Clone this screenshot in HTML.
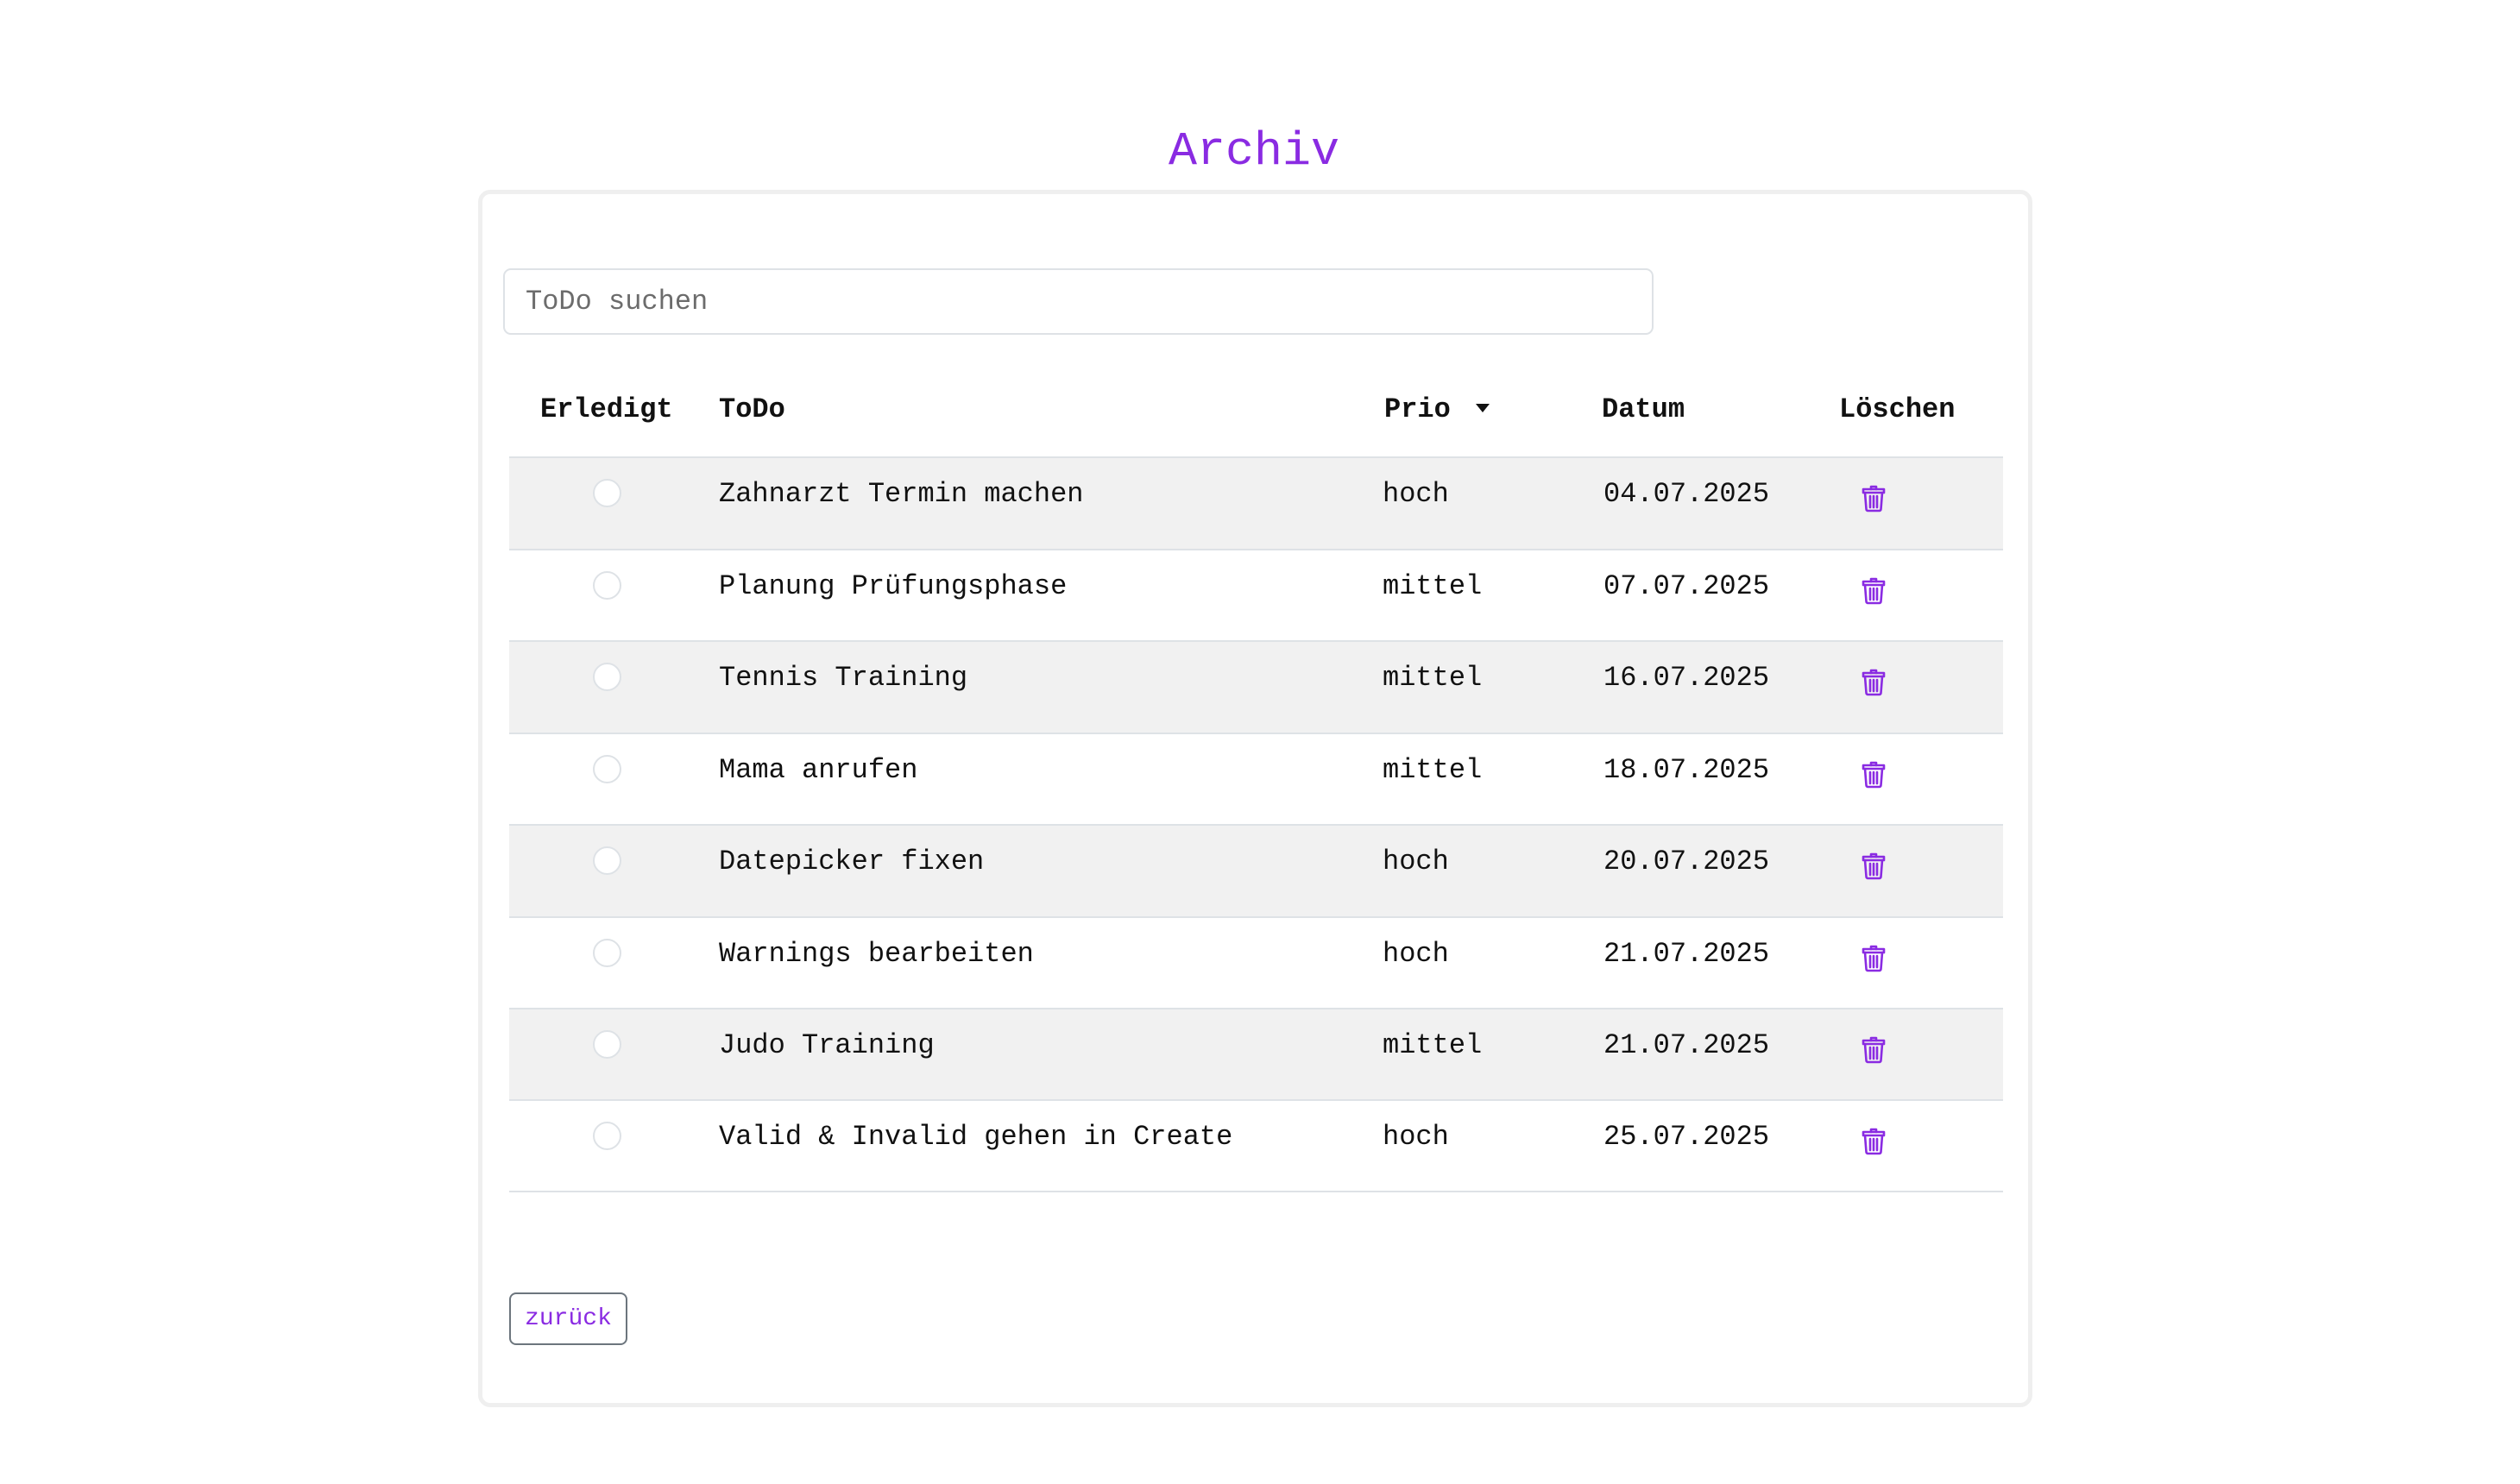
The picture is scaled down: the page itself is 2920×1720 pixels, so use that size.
<!DOCTYPE html>
<html><head><meta charset="utf-8"><style>
html,body{margin:0;padding:0;background:#fff;width:2920px;height:1720px;overflow:hidden;font-family:"Liberation Mono","Courier New",monospace;color:#111;}
.abs{position:absolute;}
.title{position:absolute;left:-7px;width:2920px;top:143px;text-align:center;font-size:55px;color:#8a2be2;line-height:66px;}
.card{position:absolute;left:554px;top:220px;width:1791px;height:1401px;border:5px solid #efefef;border-radius:14px;}
.search{position:absolute;left:583px;top:311px;width:1329px;height:73px;border:2px solid #dee2e6;border-radius:9px;font-size:32px;color:#6c6c6c;line-height:73px;box-sizing:content-box;}
.search span{position:absolute;left:24px;}
.th{position:absolute;top:455px;font-size:32px;font-weight:bold;line-height:40px;}
.row{position:absolute;left:590px;width:1731px;height:105px;border-top:2px solid #dee2e6;}
.row.g{background:#f1f1f1;}
.row .t{position:absolute;top:22px;font-size:32px;line-height:40px;white-space:pre;}
.radio{position:absolute;left:97px;top:24px;width:29px;height:29px;border:2px solid #dee2e6;border-radius:50%;background:#fff;}
.trash{position:absolute;left:1567px;top:30px;}
.last{position:absolute;left:590px;top:1380px;width:1731px;border-top:2px solid #dee2e6;}
.btn{position:absolute;left:590px;top:1498px;width:133px;height:57px;border:2px solid #6c757d;border-radius:8px;color:#8a2be2;font-size:28px;line-height:57px;text-align:center;}
</style></head><body>
<div class="title">Archiv</div>
<div class="card"></div>
<div class="search"><span>ToDo suchen</span></div>
<div class="th" style="left:626px">Erledigt</div>
<div class="th" style="left:833px">ToDo</div>
<div class="th" style="left:1604px">Prio</div>
<svg class="abs" style="left:1709px;top:467px" width="18" height="12" viewBox="0 0 18 12"><path d="M1 1h16L9 11z" fill="#111"/></svg>
<div class="th" style="left:1856px">Datum</div>
<div class="th" style="left:2131px">Löschen</div>

<div class="row g" style="top:529px"><div class="radio"></div><div class="t" style="left:243px">Zahnarzt Termin machen</div><div class="t" style="left:1012px">hoch</div><div class="t" style="left:1268px">04.07.2025</div><svg class="trash" width="28" height="33" viewBox="0 0 28 33"><g fill="none" stroke="#8a2be2" stroke-width="2.6" stroke-linecap="round" stroke-linejoin="round"><path d="M2 6h24v4H2z"/><path d="M11 6V3h6v3"/><path d="M4 10l1.5 19a2 2 0 0 0 2 2h13a2 2 0 0 0 2-2L24 10"/><path d="M10 14v13M14 14v13M18 14v13"/></g></svg></div>
<div class="row" style="top:636px"><div class="radio"></div><div class="t" style="left:243px">Planung Prüfungsphase</div><div class="t" style="left:1012px">mittel</div><div class="t" style="left:1268px">07.07.2025</div><svg class="trash" width="28" height="33" viewBox="0 0 28 33"><g fill="none" stroke="#8a2be2" stroke-width="2.6" stroke-linecap="round" stroke-linejoin="round"><path d="M2 6h24v4H2z"/><path d="M11 6V3h6v3"/><path d="M4 10l1.5 19a2 2 0 0 0 2 2h13a2 2 0 0 0 2-2L24 10"/><path d="M10 14v13M14 14v13M18 14v13"/></g></svg></div>
<div class="row g" style="top:742px"><div class="radio"></div><div class="t" style="left:243px">Tennis Training</div><div class="t" style="left:1012px">mittel</div><div class="t" style="left:1268px">16.07.2025</div><svg class="trash" width="28" height="33" viewBox="0 0 28 33"><g fill="none" stroke="#8a2be2" stroke-width="2.6" stroke-linecap="round" stroke-linejoin="round"><path d="M2 6h24v4H2z"/><path d="M11 6V3h6v3"/><path d="M4 10l1.5 19a2 2 0 0 0 2 2h13a2 2 0 0 0 2-2L24 10"/><path d="M10 14v13M14 14v13M18 14v13"/></g></svg></div>
<div class="row" style="top:849px"><div class="radio"></div><div class="t" style="left:243px">Mama anrufen</div><div class="t" style="left:1012px">mittel</div><div class="t" style="left:1268px">18.07.2025</div><svg class="trash" width="28" height="33" viewBox="0 0 28 33"><g fill="none" stroke="#8a2be2" stroke-width="2.6" stroke-linecap="round" stroke-linejoin="round"><path d="M2 6h24v4H2z"/><path d="M11 6V3h6v3"/><path d="M4 10l1.5 19a2 2 0 0 0 2 2h13a2 2 0 0 0 2-2L24 10"/><path d="M10 14v13M14 14v13M18 14v13"/></g></svg></div>
<div class="row g" style="top:955px"><div class="radio"></div><div class="t" style="left:243px">Datepicker fixen</div><div class="t" style="left:1012px">hoch</div><div class="t" style="left:1268px">20.07.2025</div><svg class="trash" width="28" height="33" viewBox="0 0 28 33"><g fill="none" stroke="#8a2be2" stroke-width="2.6" stroke-linecap="round" stroke-linejoin="round"><path d="M2 6h24v4H2z"/><path d="M11 6V3h6v3"/><path d="M4 10l1.5 19a2 2 0 0 0 2 2h13a2 2 0 0 0 2-2L24 10"/><path d="M10 14v13M14 14v13M18 14v13"/></g></svg></div>
<div class="row" style="top:1062px"><div class="radio"></div><div class="t" style="left:243px">Warnings bearbeiten</div><div class="t" style="left:1012px">hoch</div><div class="t" style="left:1268px">21.07.2025</div><svg class="trash" width="28" height="33" viewBox="0 0 28 33"><g fill="none" stroke="#8a2be2" stroke-width="2.6" stroke-linecap="round" stroke-linejoin="round"><path d="M2 6h24v4H2z"/><path d="M11 6V3h6v3"/><path d="M4 10l1.5 19a2 2 0 0 0 2 2h13a2 2 0 0 0 2-2L24 10"/><path d="M10 14v13M14 14v13M18 14v13"/></g></svg></div>
<div class="row g" style="top:1168px"><div class="radio"></div><div class="t" style="left:243px">Judo Training</div><div class="t" style="left:1012px">mittel</div><div class="t" style="left:1268px">21.07.2025</div><svg class="trash" width="28" height="33" viewBox="0 0 28 33"><g fill="none" stroke="#8a2be2" stroke-width="2.6" stroke-linecap="round" stroke-linejoin="round"><path d="M2 6h24v4H2z"/><path d="M11 6V3h6v3"/><path d="M4 10l1.5 19a2 2 0 0 0 2 2h13a2 2 0 0 0 2-2L24 10"/><path d="M10 14v13M14 14v13M18 14v13"/></g></svg></div>
<div class="row" style="top:1274px"><div class="radio"></div><div class="t" style="left:243px">Valid &amp; Invalid gehen in Create</div><div class="t" style="left:1012px">hoch</div><div class="t" style="left:1268px">25.07.2025</div><svg class="trash" width="28" height="33" viewBox="0 0 28 33"><g fill="none" stroke="#8a2be2" stroke-width="2.6" stroke-linecap="round" stroke-linejoin="round"><path d="M2 6h24v4H2z"/><path d="M11 6V3h6v3"/><path d="M4 10l1.5 19a2 2 0 0 0 2 2h13a2 2 0 0 0 2-2L24 10"/><path d="M10 14v13M14 14v13M18 14v13"/></g></svg></div>
<div class="last"></div>
<div class="btn">zurück</div>
</body></html>
